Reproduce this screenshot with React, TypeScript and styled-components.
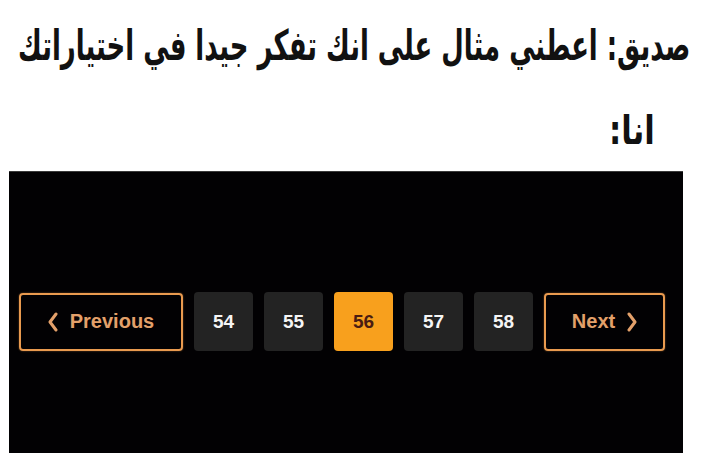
import React, { useLayoutEffect, useRef, useState } from "react";
import styled, { createGlobalStyle } from "styled-components";

const Global = createGlobalStyle`
  html, body { margin: 0; padding: 0; background: #ffffff; }
  body { width: 702px; height: 475px; overflow: hidden; font-family: "Liberation Sans", Arial, sans-serif; }
`;

const Page = styled.div`
  width: 702px;
  height: 475px;
  display: flex;
  flex-direction: column;
  background: #fff;
`;

const HeadRow = styled.div`
  display: flex;
  justify-content: flex-end;
  padding: 14px 12px 0 0;
  height: 64px;
`;

const ArabicText = styled.div<{ $size: number }>`
  direction: rtl;
  display: inline-block;
  font-family: "DejaVu Sans Condensed", "DejaVu Sans", sans-serif;
  font-weight: 700;
  font-size: ${(p) => p.$size}px;
  color: #111;
  line-height: 64px;
  white-space: nowrap;
  transform-origin: right center;
`;

const MeRow = styled.div`
  display: flex;
  justify-content: flex-end;
  padding: 0 47px 0 0;
  margin-top: 20px;
  height: 64px;
`;

const Panel = styled.div`
  margin: 9px 19px 0 9px;
  height: 282px;
  background: #020103;
  border-top: 1px solid #3a3a3a;
  display: flex;
  align-items: center;
  padding: 18px 10px 0;
  box-sizing: border-box;
  gap: 11px;
`;

const NavButton = styled.div<{ $w: number }>`
  width: ${(p) => p.$w}px;
  height: 58px;
  box-sizing: border-box;
  border: 2.5px solid #e99a4f;
  border-radius: 4px;
  box-shadow: 0 0 2px rgba(233, 154, 79, 0.5);
  display: flex;
  align-items: center;
  justify-content: center;
  gap: 12px;
  color: #e3a06a;
  font-weight: 700;
  font-size: 20px;
  font-family: "Liberation Sans", Arial, sans-serif;
`;

const PageBtn = styled.div<{ $active?: boolean }>`
  width: 59px;
  height: 59px;
  border-radius: 4px;
  background: ${(p) => (p.$active ? "#f8a01d" : "#232323")};
  color: ${(p) => (p.$active ? "#4a1c12" : "#f5f5f5")};
  display: flex;
  align-items: center;
  justify-content: center;
  font-weight: 700;
  font-size: 19px;
  font-family: "Liberation Sans", Arial, sans-serif;
`;

const Chevron = ({ dir }: { dir: "l" | "r" }) => (
  <svg width="10" height="20" viewBox="0 0 10 20">
    <path
      d={dir === "l" ? "M8 2 L2 10 L8 18" : "M2 2 L8 10 L2 18"}
      fill="none"
      stroke="#e3a06a"
      strokeWidth="3"
      strokeLinecap="round"
      strokeLinejoin="round"
    />
  </svg>
);

function FitText({ text, size, width }: { text: string; size: number; width: number }) {
  const ref = useRef<HTMLDivElement>(null);
  const [scale, setScale] = useState(1);
  useLayoutEffect(() => {
    if (ref.current) {
      const w = ref.current.offsetWidth;
      if (w > 0) setScale(width / w);
    }
  }, [text, width]);
  return (
    <ArabicText ref={ref} $size={size} style={{ transform: `scaleX(${scale})` }}>
      {text}
    </ArabicText>
  );
}

export default function App() {
  return (
    <Page>
      <Global />
      <HeadRow>
        <FitText text="صديق: اعطني مثال على انك تفكر جيدا في اختياراتك" size={42} width={672} />
      </HeadRow>
      <MeRow>
        <FitText text="انا:" size={40} width={46} />
      </MeRow>
      <Panel>
        <NavButton $w={164}>
          <Chevron dir="l" />
          Previous
        </NavButton>
        {[54, 55, 56, 57, 58].map((n) => (
          <PageBtn key={n} $active={n === 56}>
            {n}
          </PageBtn>
        ))}
        <NavButton $w={121}>
          Next
          <Chevron dir="r" />
        </NavButton>
      </Panel>
    </Page>
  );
}
